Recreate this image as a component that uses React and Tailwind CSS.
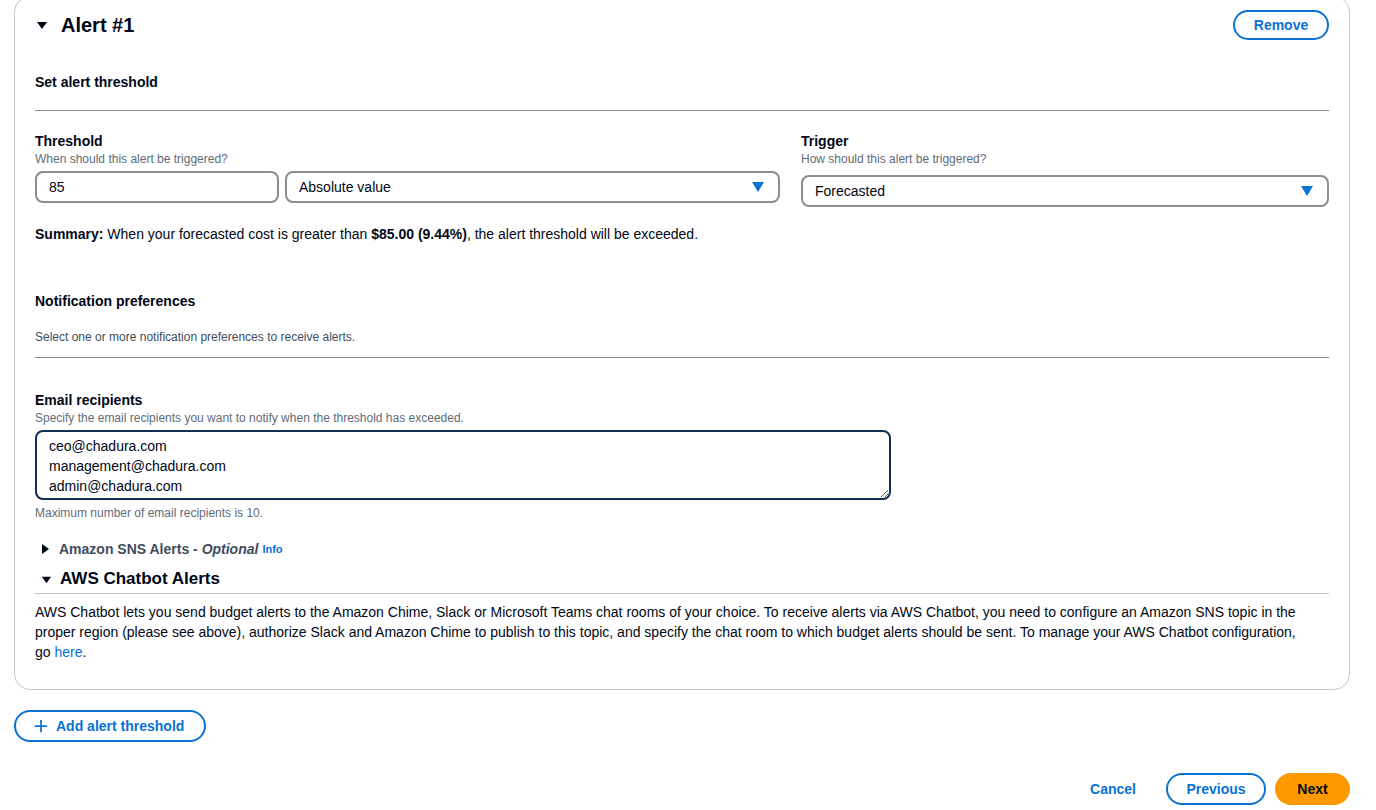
import React, { useState } from 'react';

const font = { fontFamily: '"Liberation Sans", Arial, sans-serif' };

const Caret = ({ open = true, className = '' }) => (
  <svg viewBox="0 0 12 12" className={className} aria-hidden="true">
    {open ? <path d="M1 3h10L6 10z" fill="currentColor" /> : <path d="M3 1v10l7-5z" fill="currentColor" />}
  </svg>
);

const SelectBox = ({ value, className = '' }) => (
  <div className={`flex items-center justify-between h-[32px] rounded-lg border-2 border-[#8c8c94] bg-white pl-[12px] pr-[14px] text-[14px] text-[#000716] ${className}`}>
    <span>{value}</span>
    <svg viewBox="0 0 12 10" className="w-[12px] h-[10px] text-[#0972d3]">
      <path d="M0 0h12L6 10z" fill="currentColor" />
    </svg>
  </div>
);

export default function App() {
  const [threshold, setThreshold] = useState('85');
  const [emails, setEmails] = useState('ceo@chadura.com\nmanagement@chadura.com\nadmin@chadura.com');

  return (
    <div className="min-h-[810px] bg-white text-[#000716] overflow-hidden" style={font}>
      <div className="ml-[14px] mr-[26px] mt-[-4px] rounded-2xl border border-[#c6c6cd] px-[20px] pt-[13px] pb-[27px]">
        {/* header */}
        <div className="flex items-center justify-between">
          <div className="flex items-center">
            <Caret className="w-[12px] h-[12px] ml-[1px] mr-[13px] text-[#000716]" />
            <h2 className="text-[20px] font-bold leading-[30px]">Alert #1</h2>
          </div>
          <button className="h-[30px] w-[96px] rounded-full border-2 border-[#0972d3] text-[14px] font-bold text-[#0972d3]">
            Remove
          </button>
        </div>

        <h3 className="mt-[32px] text-[14px] font-bold leading-[20px]">Set alert threshold</h3>
        <div className="mt-[18px] h-px bg-[#8c8c94]" />

        <div className="mt-[20px] flex gap-[21px]">
          <div className="w-[745px]">
            <div className="text-[14px] font-bold leading-[20px]">Threshold</div>
            <div className="text-[12px] leading-[16px] text-[#5f6b7a]">When should this alert be triggered?</div>
            <div className="mt-[4px] flex gap-[6px]">
              <input
                value={threshold}
                onChange={e => setThreshold(e.target.value)}
                className="h-[32px] w-[244px] rounded-lg border-2 border-[#8c8c94] px-[12px] text-[14px] outline-none"
              />
              <SelectBox value="Absolute value" className="flex-1" />
            </div>
          </div>
          <div className="flex-1">
            <div className="text-[14px] font-bold leading-[20px]">Trigger</div>
            <div className="text-[12px] leading-[16px] text-[#5f6b7a]">How should this alert be triggered?</div>
            <SelectBox value="Forecasted" className="mt-[8px]" />
          </div>
        </div>

        <p className="mt-[17px] text-[14px] leading-[20px]">
          <span className="font-bold">Summary:</span> When your forecasted cost is greater than <span className="font-bold">$85.00 (9.44%)</span>, the alert threshold will be exceeded.
        </p>

        <h3 className="mt-[47px] text-[14px] font-bold leading-[20px]">Notification preferences</h3>
        <p className="mt-[18px] text-[12px] leading-[16px] text-[#414d5c]">Select one or more notification preferences to receive alerts.</p>
        <div className="mt-[12px] h-px bg-[#8c8c94]" />

        <div className="mt-[32px] text-[14px] font-bold leading-[20px]">Email recipients</div>
        <div className="text-[12px] leading-[16px] text-[#5f6b7a]">Specify the email recipients you want to notify when the threshold has exceeded.</div>
        <textarea
          value={emails}
          onChange={e => setEmails(e.target.value)}
          className="mt-[4px] block h-[70px] w-[856px] resize-y rounded-lg border-2 border-[#0f2f55] px-[12px] pt-[4px] text-[14px] leading-[20px] outline-none"
          style={font}
        />
        <div className="mt-[5px] text-[12px] leading-[16px] text-[#5f6b7a]">Maximum number of email recipients is 10.</div>

        <div className="mt-[18px] flex items-center text-[14px] leading-[20px]">
          <Caret open={false} className="w-[12px] h-[12px] ml-[4px] mr-[8px] text-[#000716]" />
          <span className="font-bold text-[#414d5c]">Amazon SNS Alerts - <i>Optional</i></span>
          <span className="ml-[4px] text-[11px] font-bold text-[#0972d3]">Info</span>
        </div>

        <div className="mt-[8px] flex items-center">
          <Caret className="w-[11px] h-[11px] ml-[6px] mr-[8px] text-[#000716]" />
          <h3 className="text-[17px] font-bold leading-[24px]">AWS Chatbot Alerts</h3>
        </div>
        <div className="mt-[2px] h-px bg-[#c6c6cd]" />
        <p className="mt-[8px] text-[14px] leading-[20px] pr-[20px]">
          AWS Chatbot lets you send budget alerts to the Amazon Chime, Slack or Microsoft Teams chat rooms of your choice. To receive alerts via AWS Chatbot, you need to configure an Amazon SNS topic in the proper region (please see above), authorize Slack and Amazon Chime to publish to this topic, and specify the chat room to which budget alerts should be sent. To manage your AWS Chatbot configuration, go <a className="text-[#0972d3]">here</a>.
        </p>
      </div>

      <div className="ml-[14px] mt-[20px]">
        <button className="flex h-[32px] items-center rounded-full border-2 border-[#0972d3] pl-[18px] pr-[20px] text-[14px] font-bold text-[#0972d3]">
          <svg viewBox="0 0 16 16" className="mr-[8px] h-[14px] w-[14px]">
            <path d="M8 1v14M1 8h14" stroke="currentColor" strokeWidth="2" fill="none" />
          </svg>
          Add alert threshold
        </button>
      </div>

      <div className="mr-[26px] mt-[31px] flex items-center justify-end">
        <button className="mr-[30px] text-[14px] font-bold text-[#0972d3]">Cancel</button>
        <button className="h-[32px] w-[100px] rounded-full border-2 border-[#0972d3] text-[14px] font-bold text-[#0972d3]">Previous</button>
        <button className="ml-[9px] h-[32px] w-[75px] rounded-full bg-[#ff9900] text-[14px] font-bold text-[#000716]">Next</button>
      </div>
    </div>
  );
}
